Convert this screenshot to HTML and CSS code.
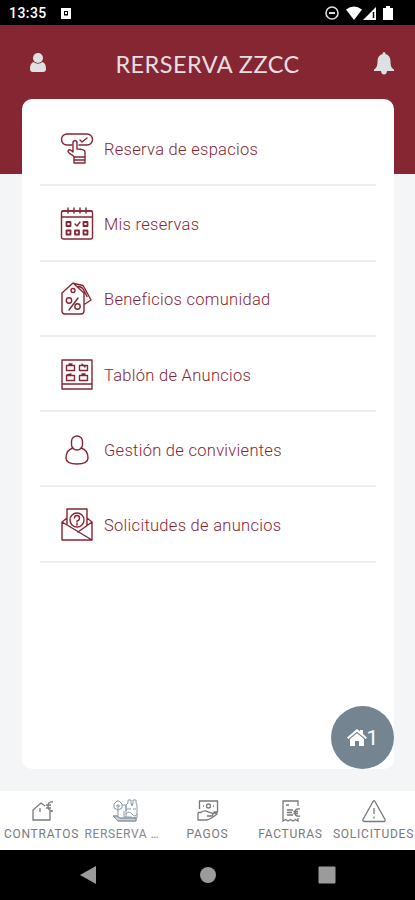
FILE: index.html
```html
<!DOCTYPE html>
<html lang="es">
<head>
    <meta charset="UTF-8">
    <meta name="viewport" content="width=device-width, initial-scale=1.0">
    <title>Rerserva ZZCC</title>
    <link rel="stylesheet" href="styles.css">
</head>
<body>
    <div class="status-bar">
        <span class="clock">13:35</span>
        <svg class="status-app" width="12" height="13" viewBox="0 0 12 13"><path fill="#fff" fill-rule="evenodd" d="M1 1h10v11H1zM4 4v4.500h4V4z"/><path fill="#fff" d="M5 5h2v2H5z"/></svg>
        <svg class="status-icons" width="70" height="16" viewBox="0 0 70 16">
            <circle cx="8" cy="8" r="6" fill="none" stroke="#ddd" stroke-width="1.600"/>
            <path d="M5 8h6" stroke="#ddd" stroke-width="2"/>
            <path d="M22 4.500q8-6 16 0L30 15z" fill="#fff"/>
            <path d="M52 2v13H39z" fill="#fff"/>
            <path d="M49.500 7v6" stroke="#000" stroke-width="1.500"/>
            <path d="M59 3h3V1h4v2h3v12H59z" fill="#fff"/>
        </svg>
    </div>

    <div class="header">
        <svg class="user-icon" width="18" height="22" viewBox="0 0 18 22"><circle cx="9" cy="6" r="5"/><path d="M4.500 10C2 11 1 13.500 1 17q0 3 3 3h10q3 0 3-3c0-3.500-1-6-3.500-7Q9 13.500 4.500 10z"/></svg>
        <h1>RERSERVA ZZCC</h1>
        <svg class="bell-icon" width="22" height="24" viewBox="0 0 22 24"><path d="M11 0q1.500 0 1.500 2C16 3 17.500 5.500 17.500 9.500c0 4.500 1 6.500 3.500 8V19H1v-1.500c2.500-1.500 3.500-3.500 3.500-8C4.500 5.500 6 3 9.500 2Q9.500 0 11 0zM8 19h6q-.5 3.500-3 3.500T8 19z"/></svg>
    </div>

    <div class="card">
        <a class="menu-item" href="#">
            <svg class="menu-icon" viewBox="0 0 34 34">
                <path d="M12 13H7a5.500 5.500 0 0 1 0-11h20a5.500 5.500 0 0 1 0 11h-8M20 8l2 2 5-4"/>
                <path d="M14 25c0-2-6-3-6-6q1-3 5 1V10q2-3 4 0v7q8 0 8 3v5M14 25h11v6H14zM14 28h11"/>
            </svg>
            <span>Reserva de espacios</span>
        </a>
        <a class="menu-item" href="#">
            <svg class="menu-icon" viewBox="0 0 34 34">
                <rect x="1.500" y="4" width="31" height="28" rx="2"/>
                <path d="M2 10h30M8 1v5M14 1v5M20 1v5M26 1v5M2 4h30M15 17l2 2 3-4"/>
                <path class="thick" d="M6.500 15h4v4h-4zM23.500 15h4v4h-4zM6.500 23.500h4v4h-4zM15 23.500h4v4h-4zM23.500 23.500h4v4h-4z"/>
            </svg>
            <span>Mis reservas</span>
        </a>
        <a class="menu-item" href="#">
            <svg class="menu-icon" viewBox="0 0 34 34">
                <path d="M2 11 13 1l11 10v18q0 3-3 3H5q-3 0-3-3zM14 1.500l7 1.500q2 0 3 2l7 13-6 4M18 4.500q4 0 6 4l3 6"/>
                <circle cx="13" cy="8.500" r="2"/>
                <circle cx="9" cy="18.500" r="2.700"/><circle cx="17.500" cy="24.500" r="2.700"/><path d="m18 16-9 12"/>
            </svg>
            <span>Beneficios comunidad</span>
        </a>
        <a class="menu-item" href="#">
            <svg class="menu-icon" viewBox="0 0 34 34">
                <path d="M2 2h30v29H2zM2 26h30"/>
                <path d="M6.500 7.500h8v5h-8zM19.500 7.500h8v5h-8zM6.500 17.500h8v5h-8zM19.500 17.500h8v5h-8zM9 6h3M22 6l3 3M7 17l4-1M22 16h3"/>
            </svg>
            <span>Tablón de Anuncios</span>
        </a>
        <a class="menu-item" href="#">
            <svg class="menu-icon" viewBox="0 0 34 34">
                <rect x="11.500" y="3" width="11" height="14" rx="5.500"/>
                <path d="M13 15q-7 2-7 10 0 6 11 6t11-6q0-8-7-10"/>
            </svg>
            <span>Gestión de convivientes</span>
        </a>
        <a class="menu-item" href="#">
            <svg class="menu-icon" viewBox="0 0 34 34">
                <path d="M7 17V1h20v16M7 10l-5 4v18h30V14l-5-4M2 14l30 18M32 14 18 24"/>
                <circle class="seal" cx="17" cy="12" r="7"/>
                <path d="M14.500 10q0-2.500 2.500-2.500t2.500 2.500T17 13v1M17 15.500v1.500"/>
            </svg>
            <span>Solicitudes de anuncios</span>
        </a>

        <!-- Floating home button -->
        <button class="home-button">
            <svg width="20" height="17" viewBox="0 0 20 17"><path d="M0 8.500 10 0l3 2.500V1h3v4l4 3.500-1.300 1.500L10 2.800 1.300 10z"/><path d="M3 10 10 4.200 17 10v7h-5v-5H8v5H3z"/></svg>
            <span>1</span>
        </button>
    </div>

    <div class="tab-bar">
        <a class="tab" href="#">
            <svg viewBox="0 0 26 24"><path d="M16 7l-4-3-8 7v10h17V11M11 9v4M24 3q-5-1-5 4t5 5M17 6h5M17 9h5"/></svg>
            <span>CONTRATOS</span>
        </a>
        <a class="tab active" href="#">
            <svg viewBox="0 0 26 24"><path class="shade" d="M1 17q5-1 7 2h16v3H6z"/><path d="M5 2 2 5v4l4 2 4-2V5L7 2zM6 5v13M10 6h4v12M14 12V6l2-2V1h3v3l1 3 1-3V1h3v3l1 2v13h-4M15 10h4M21 10h3M14 15q3-4 6 0t5 0M12 12v6h8M1 17q5-1 7 2h16v3H6zM4 7h4"/></svg>
            <span>RERSERVA …</span>
        </a>
        <a class="tab" href="#">
            <svg viewBox="0 0 26 24"><path d="M4.500 10V2h18v11h-4M3 13.500h3q4-3 7-.5l4 1q2 1 0 3h-5M3 13.500V21h8q4 0 11-6-2-2-5 0M8 7h1M18 7h1"/><circle cx="13.500" cy="7" r="2"/></svg>
            <span>PAGOS</span>
        </a>
        <a class="tab" href="#">
            <svg viewBox="0 0 26 24"><path d="M20 7V2H5v20l2.500-1.500L10 22l2.500-1.500L15 22l2.500-1.500L20 22v-3M8 6h3M9 11h6M9 13.500h5M9 16h6M22 10q-5-1-5 3.500t5 3.500M15.500 12.500H20M15.500 14.500H20"/></svg>
            <span>FACTURAS</span>
        </a>
        <a class="tab" href="#">
            <svg viewBox="0 0 26 24"><path d="M12 2.500q1-1.500 2 0l10 18q.5 2-1.500 2h-19q-2 0-1.500-2z"/><path d="M13 9v6M13 17.500v2"/></svg>
            <span>SOLICITUDES</span>
        </a>
    </div>

    <div class="nav-bar">
        <svg width="18" height="20" viewBox="0 0 18 20"><path d="M1 10 17 1v18z"/></svg>
        <svg width="16" height="20" viewBox="0 0 16 20"><circle cx="8" cy="10" r="8"/></svg>
        <svg width="18" height="20" viewBox="0 0 18 20"><rect x="0.500" y="1.500" width="17" height="17" rx="1"/></svg>
    </div>
</body>
</html>
```

FILE: styles.css
```css
* {
    margin: 0;
    padding: 0;
    box-sizing: border-box;
}

body {
    background-color: #f3f5f7;
    font-family: Roboto, sans-serif;
    height: 900px;
    display: flex;
    flex-direction: column;
    overflow: hidden;
}

a {
    color: inherit;
    text-decoration: none;
}

.status-bar {
    background-color: #000;
    color: #fff;
    height: 25px;
    flex: none;
    display: flex;
    align-items: center;
    padding: 1px 21px 0 9px;
}

.clock {
    font-size: 14px;
    font-weight: 500;
    letter-spacing: 0.45px;
    width: 51px;
}

.status-icons {
    margin-left: auto;
}

.header {
    background-color: #862633;
    height: 149px;
    flex: none;
    display: flex;
    align-items: flex-start;
    justify-content: space-between;
    padding: 25px 20px 0 29px;
}

.header h1 {
    color: #e5dfe2;
    font-family: Lato, sans-serif;
    font-size: 23.5px;
    line-height: 28px;
    font-weight: 400;
    letter-spacing: 0.45px;
    white-space: nowrap;
    margin-right: 5px;
}

.header svg {
    fill: #dde1e4;
    margin-top: 2px;
}

.card {
    position: relative;
    background-color: #fff;
    width: 372px;
    height: 670px;
    flex: none;
    margin: -75px 0 0 22px;
    padding: 12px 18px 0;
    border-radius: 10px;
}

.menu-item {
    display: flex;
    align-items: center;
    gap: 10px;
    height: 75.3px;
    padding: 2px 0 0 20px;
    border-bottom: 2px solid #ededee;
    color: #862633;
    font-size: 16.5px;
    font-weight: 300;
    letter-spacing: 0.29px;
}

.menu-item span {
    padding-top: 1px;
}

.menu-icon {
    width: 34px;
    height: 34px;
    fill: none;
    stroke: #862633;
    stroke-width: 1.4;
    stroke-linejoin: round;
    stroke-linecap: round;
}

.menu-icon .seal {
    fill: #fff;
}

.menu-icon .thick {
    stroke-width: 1.8;
}

.home-button {
    position: absolute;
    right: 0;
    bottom: 0;
    width: 63px;
    height: 63px;
    border: none;
    border-radius: 50%;
    background-color: #748591;
    color: #fff;
    font-family: Roboto, sans-serif;
    font-size: 21px;
    display: flex;
    align-items: center;
    justify-content: center;
}

.home-button svg {
    fill: #fff;
}

.tab-bar {
    background-color: #fff;
    height: 59px;
    flex: none;
    margin-top: 22px;
    display: flex;
}

.tab {
    width: 83px;
    flex: none;
    display: flex;
    flex-direction: column;
    align-items: center;
    padding-top: 8px;
    color: #77797c;
    font-size: 12px;
    line-height: 14px;
    letter-spacing: 0.75px;
    white-space: nowrap;
}

.tab svg {
    width: 26px;
    height: 24px;
    margin-bottom: 4px;
    fill: none;
    stroke: #77797c;
    stroke-width: 1.3;
}

.tab.active {
    color: #7d8791;
    letter-spacing: 0.6px;
    padding-right: 5px;
}

.tab.active svg {
    margin-left: 5px;
    stroke: #8a98a5;
    stroke-width: 1;
}

.tab .shade {
    fill: #c9d1d8;
}

.nav-bar {
    background-color: #000;
    height: 50px;
    flex: none;
    display: flex;
    align-items: center;
    justify-content: space-between;
    padding: 0 79px 0 79px;
}

.nav-bar svg {
    fill: #9b9b9b;
}
```
